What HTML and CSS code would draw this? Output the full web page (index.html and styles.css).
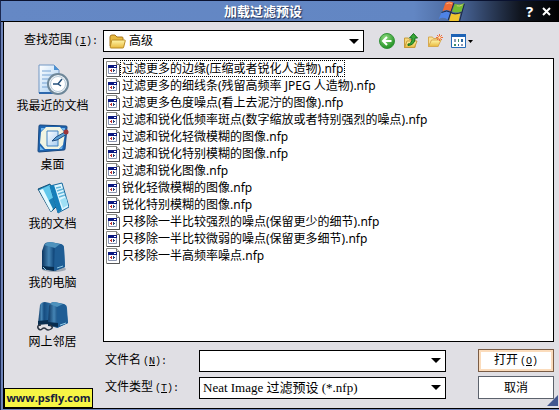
FILE: index.html
```
<!DOCTYPE html>
<html lang="zh-CN">

<head>
    <meta charset="UTF-8">
    <meta name="viewport" content="width=device-width, initial-scale=1.0">
    <title>加载过滤预设</title>
    <link rel="stylesheet" href="styles.css">
</head>

<body>
    <svg class="defs" aria-hidden="true">
        <defs>
            <linearGradient id="tower" x1="0" y1="0" x2="1" y2="0">
                <stop offset="0" stop-color="#0c3560" />
                <stop offset="0.3" stop-color="#4585b5" />
                <stop offset="0.5" stop-color="#154c80" />
                <stop offset="1" stop-color="#2c6ca2" />
            </linearGradient>
            <linearGradient id="folder" x1="0" y1="0" x2="0" y2="1">
                <stop offset="0" stop-color="#fff6a8" />
                <stop offset="1" stop-color="#e9b93c" />
            </linearGradient>
            <linearGradient id="paper" x1="0" y1="0" x2="1" y2="1">
                <stop offset="0" stop-color="#ffffff" />
                <stop offset="1" stop-color="#a5cdf2" />
            </linearGradient>
            <radialGradient id="green" cx="0.4" cy="0.3" r="0.8">
                <stop offset="0" stop-color="#8fdc80" />
                <stop offset="1" stop-color="#128515" />
            </radialGradient>
            <symbol id="file" viewBox="0 0 14 16">
                <path d="M.5 .5h10l3 3v12H.5z" fill="#fff" stroke="#8b8b86" />
                <path d="M10.500 .5v3h3" fill="#ddd" stroke="#73736f" />
                <path d="M13.500 4v11.500H1" fill="none" stroke="#555" />
                <path d="M2.500 5.500h8v7h-8z" fill="#fff" stroke="#8b95b0" />
                <path d="M2 4h9v3H2z" fill="#0a1880" />
                <path d="M8 5h2v1H8z" fill="#fff" />
                <path d="M4 9h1v1H4zM5 8h1v3H5z" fill="#b33" />
                <path d="M7 8h1v3H7zM8 9h1v1H8z" fill="#247" />
            </symbol>
            <symbol id="arrow" viewBox="0 0 10 5">
                <path d="M0 0h10L5 5z" fill="#000" />
            </symbol>
        </defs>
    </svg>

    <div class="dialog">
        <div class="titlebar">
            <h1>加载过滤预设</h1>
            <svg class="flag" viewBox="0 0 30 21" aria-hidden="true">
                <path d="M8 2Q12-1 17 2L14 11Q9 8 5 11z" fill="#ee6a35" />
                <path d="M18 3Q23 5 28 2L25 11Q20 13 15 11z" fill="#75bd32" />
                <path d="M4 12Q9 9 13 12L11 20Q6 16 1 19z" fill="#4e83e6" />
                <path d="M14 13Q19 15 24 12L22 21H12z" fill="#efc52f" />
                <path d="M17 2L11 20M28 3L23 21M4 12Q10 9 14 12T25 12" fill="none" stroke="#17223c" />
                <path d="M9 3Q12 1 15 3M20 5Q23 6 26 4" fill="none" stroke="#ffd1a0" opacity="0.7" />
            </svg>
            <button class="caption-btn" type="button" aria-label="帮助">?</button>
            <button class="caption-btn" type="button" aria-label="关闭">
                <svg width="9" height="9" viewBox="0 0 9 9"><path d="M1 1l7 7M8 1L1 8" stroke="#fff" stroke-width="2" /></svg>
            </button>
        </div>

        <form class="content">
            <div class="lookin">
                <label for="lookin">查找范围<span class="key">(<u>I</u>):</span></label>
                <div class="combo">
                    <svg class="folder" width="17" height="15" viewBox="0 0 17 15" aria-hidden="true">
                        <path d="M1 12V3q0-2 2-2h3l2 2h5q1 0 1 1v8z" fill="#e7b93f" stroke="#a8771c" />
                        <path d="M3.500 6h12q1 0 .7 1l-1.500 6q0 1-1 1H2q-1 0-.8-1L2.500 7q.2-1 1-1z" fill="url(#folder)" stroke="#b98a25" />
                    </svg>
                    <select id="lookin">
                        <option>高级</option>
                    </select>
                    <svg class="arrow"><use href="#arrow" /></svg>
                </div>
                <div class="tools">
                    <button type="button" aria-label="后退">
                        <svg width="16" height="16" viewBox="0 0 16 16">
                            <circle cx="8" cy="8" r="7.500" fill="url(#green)" stroke="#34933a" />
                            <path d="M12.500 8H4.500M8 4L4 8l4 4" fill="none" stroke="#fff" stroke-width="2" />
                        </svg>
                    </button>
                    <button type="button" aria-label="向上">
                        <svg width="16" height="16" viewBox="0 0 16 16">
                            <path d="M1.500 14.500V5h4l1 1.500H12v8z" fill="#f5d878" stroke="#c79a3a" />
                            <path d="M1.500 14.500L4 8h10l-2.500 6.500z" fill="url(#folder)" stroke="#c79a3a" />
                            <path d="M5 11q4 0 4-6H6.500l4-4.500L14.500 5H12q0 7-7 7.500z" fill="#38a838" stroke="#15701c" />
                        </svg>
                    </button>
                    <button type="button" aria-label="新建文件夹">
                        <svg width="16" height="16" viewBox="0 0 16 16">
                            <path d="M1.500 13.500V4h4l1 1.500H11v8z" fill="#f8e194" stroke="#d7a950" />
                            <path d="M1.500 13.500L4.500 7H14l-3 6.500z" fill="url(#folder)" stroke="#d7a950" />
                            <path d="M12.500 1v7M9 4.500h7M10 2l5 5M15 2l-5 5" stroke="#ee6b3e" />
                            <circle cx="12.500" cy="4.500" r="1.200" fill="#fff0b0" />
                        </svg>
                    </button>
                    <button type="button" aria-label="查看">
                        <svg width="22" height="15" viewBox="0 0 22 15">
                            <path d="M.5 .5h14v13H.5z" fill="#fff" stroke="#246bb8" />
                            <path d="M0 0h15v3H0z" fill="#1d63b5" />
                            <path d="M3 5h2v3H3zM10 10h2v2h-2z" fill="#8c99b5" />
                            <path d="M7 5h1v3H7zM3 10h2v2H3z" fill="#3c8f68" />
                            <path d="M10 5h2v3h-2zM7 10h1v2H7z" fill="#2e69a0" />
                            <path d="M17 6h5l-2.500 3z" fill="#000" />
                        </svg>
                    </button>
                </div>
            </div>

            <div class="middle">
                <nav class="places">
                    <button type="button">
                        <svg width="32" height="32" viewBox="0 0 32 32">
                            <path d="M2 1h15l5 5v23H2z" fill="url(#paper)" stroke="#7297c4" />
                            <path d="M17 1v5h5" fill="#4d91d2" />
                            <path d="M5 7h9M5 11h12M5 15h9M5 19h8M5 23h8" stroke="#77a3d4" />
                            <path d="M2 29h19" stroke="#2e68ad" stroke-width="2" />
                            <circle cx="21" cy="20" r="10" fill="#edf3f8" stroke="#6e8799" stroke-width="2" />
                            <circle cx="21" cy="20" r="7.500" fill="#fff" stroke="#b8cad8" />
                            <path d="M16 20h5l4-5M21 20l3 2" fill="none" stroke="#24507c" stroke-width="1.500" />
                        </svg>
                        我最近的文档
                    </button>
                    <button type="button">
                        <svg width="32" height="32" viewBox="0 0 32 32">
                            <path d="M3 2l26 1q1 0 1 1l-2 22q0 1-1 1L2 29q-1 0-1-1L2 3q0-1 1-1z" fill="#1d65b3" stroke="#174780" />
                            <path d="M9 4h14l5 6-2 12-4 4H8l-5-6 1-11z" fill="#f1f4e2" />
                            <path d="M4 8V5h4zM28 5v4l-4-4zM3 23v4h4zM26 23l-1 3h-3z" fill="#75b9ed" />
                            <path d="M10 8h11v15H10z" fill="url(#paper)" stroke="#4384c2" />
                            <path d="M15 18l4-4 9-5 2 2-10 6z" fill="#5ba0d6" stroke="#244f80" />
                            <circle cx="29" cy="9" r="2.500" fill="#9c3638" />
                        </svg>
                        桌面
                    </button>
                    <button type="button">
                        <svg width="32" height="32" viewBox="0 0 32 32">
                            <path d="M1 7l12-5 7 22-6 6z" fill="#1a80b7" stroke="#155178" />
                            <path d="M4 7l9-4 4 12-8 5z" fill="#62c8ec" />
                            <path d="M2 8l4-1 10 20-2 3z" fill="#e4faff" />
                            <path d="M13 4l12-3 7 24-11 6z" fill="#dff6ff" stroke="#176a9e" />
                            <path d="M13 4l4-1 8 25-4 3z" fill="#157eba" />
                            <path d="M19 6l5-1M20 9l6-2M21 12l6-2M22 15l6-2" stroke="#64b7db" stroke-width="1.500" />
                            <path d="M23 18l6-3 2 8-5 3z" fill="#9fdff5" />
                        </svg>
                        我的文档
                    </button>
                    <button type="button">
                        <svg width="32" height="32" viewBox="0 0 32 32">
                            <ellipse cx="17" cy="28" rx="12" ry="3" fill="#9fa9b5" />
                            <path d="M7 4q1-3 6-3l11 2q3 1 3 4l1 19-10 4-13-2V10z" fill="url(#tower)" />
                            <path d="M18 7q1-4 4-4 5 0 5 4l1 19-11 4z" fill="#1f5d94" />
                            <path d="M7 4q3-3 7-3l9 2-5 4z" fill="#4e92bd" />
                            <path d="M5 25l12 1v4L5 28z" fill="#092d4f" />
                            <path d="M6 26l3 3M20 27l6-2" stroke="#8fc9e7" />
                        </svg>
                        我的电脑
                    </button>
                    <button type="button">
                        <svg width="32" height="32" viewBox="0 0 32 32">
                            <path d="M3 5q1-3 5-3l5 1-1 19-11 2z" fill="url(#tower)" />
                            <path d="M12 6q1-4 5-4l10 2q3 1 3 4l1 15-11 5-9-3z" fill="url(#tower)" />
                            <path d="M20 8q1-4 4-4 5 0 5 3l2 16-11 5z" fill="#1f5d94" />
                            <path d="M13 4q2-2 5-2l8 2-6 3z" fill="#4e92bd" />
                            <path d="M1 21l10-1v4L1 25zM11 22l10 1v4l-10-1z" fill="#092d4f" />
                            <path d="M4 25q-4 0-3 3 2 3 4 1t4 0 5 0-1-4" fill="none" stroke="#2b3441" stroke-width="1.500" />
                            <path d="M23 25l6-2" stroke="#8fc9e7" />
                        </svg>
                        网上邻居
                    </button>
                </nav>

                <ul class="files">
                    <li><svg><use href="#file" /></svg><button class="selected" type="button">过滤更多的边缘(压缩或者锐化人造物).nfp</button></li>
                    <li><svg><use href="#file" /></svg><button type="button">过滤更多的细线条(残留高频率 JPEG 人造物).nfp</button></li>
                    <li><svg><use href="#file" /></svg><button type="button">过滤更多色度噪点(看上去泥泞的图像).nfp</button></li>
                    <li><svg><use href="#file" /></svg><button type="button">过滤和锐化低频率斑点(数字缩放或者特别强烈的噪点).nfp</button></li>
                    <li><svg><use href="#file" /></svg><button type="button">过滤和锐化轻微模糊的图像.nfp</button></li>
                    <li><svg><use href="#file" /></svg><button type="button">过滤和锐化特别模糊的图像.nfp</button></li>
                    <li><svg><use href="#file" /></svg><button type="button">过滤和锐化图像.nfp</button></li>
                    <li><svg><use href="#file" /></svg><button type="button">锐化轻微模糊的图像.nfp</button></li>
                    <li><svg><use href="#file" /></svg><button type="button">锐化特别模糊的图像.nfp</button></li>
                    <li><svg><use href="#file" /></svg><button type="button">只移除一半比较强烈的噪点(保留更少的细节).nfp</button></li>
                    <li><svg><use href="#file" /></svg><button type="button">只移除一半比较微弱的噪点(保留更多细节).nfp</button></li>
                    <li><svg><use href="#file" /></svg><button type="button">只移除一半高频率噪点.nfp</button></li>
                </ul>
            </div>

            <div class="bottom">
                <a class="site" href="#">www.psfly.com</a>
                <div class="fields">
                    <label for="filename">文件名<span class="key">(<u>N</u>):</span></label>
                    <div class="combo">
                        <input type="text" id="filename">
                        <svg class="arrow"><use href="#arrow" /></svg>
                    </div>
                    <button class="btn default" type="submit">打开<span class="key">(<u>O</u>)</span></button>

                    <label for="filetype">文件类型<span class="key">(<u>T</u>):</span></label>
                    <div class="combo">
                        <select id="filetype">
                            <option>Neat Image 过滤预设 (*.nfp)</option>
                        </select>
                        <svg class="arrow"><use href="#arrow" /></svg>
                    </div>
                    <button class="btn" type="button">取消</button>
                </div>
            </div>
            <svg class="grip" width="11" height="11" viewBox="0 0 11 11" aria-hidden="true"><path d="M11 0v11H0z" fill="#43578f" /></svg>
        </form>
    </div>
</body>

</html>
```
FILE: styles.css
```
* {
    box-sizing: border-box;
}

body {
    margin: 0;
    font-family: "Noto Sans", "Noto Sans CJK SC", sans-serif;
    font-size: 12px;
    line-height: 16px;
    color: #000;
}

button,
input,
select {
    font: inherit;
    color: inherit;
    margin: 0;
    padding: 0;
    border: none;
    background: none;
}

svg {
    flex: none;
    display: block;
}

.defs {
    position: absolute;
    width: 0;
    height: 0;
}

.dialog {
    display: flex;
    flex-direction: column;
    min-height: 100vh;
    background-color: #6d83b8;
    border-top: 1px solid #0a1230;
    border-left: 1px solid #1b2850;
    padding: 0 0 1px 2px;
}

/* title bar */
.titlebar {
    display: flex;
    align-items: center;
    height: 21px;
    margin-left: -2px;
    padding-right: 4px;
    background: linear-gradient(to right, #6588c5 0%, #6286c3 74%, #49669a 82%, #10151f 93%, #000 100%);
    border-bottom: 1px solid #000;
}

.titlebar h1 {
    flex: 1;
    margin: 0;
    padding-left: 88px;
    font-family: "Noto Sans CJK SC", sans-serif;
    font-size: 13px;
    font-weight: bold;
    line-height: 20px;
    text-align: center;
    color: #fff;
    text-shadow: 1px 1px 1px #1c2d55;
}

.flag {
    width: 30px;
    height: 20px;
    margin-right: 54px;
}

.caption-btn {
    display: flex;
    justify-content: center;
    align-items: center;
    width: 17px;
    height: 20px;
    font-size: 15px;
    font-weight: bold;
    color: #fff;
}

/* dialog body */
.content {
    flex: 1;
    display: flex;
    flex-direction: column;
    position: relative;
    background-color: #e0dfe4;
    border-left: 1px solid #000;
    border-bottom: 1px solid #000;
    padding-top: 8px;
}

.combo {
    position: relative;
    display: flex;
    align-items: center;
    background-color: #fff;
    border: 1px solid #000;
    height: 22px;
}

.combo select,
.combo input {
    flex: 1;
    min-width: 0;
    height: 20px;
    padding: 0 20px 0 3px;
    appearance: none;
    outline: none;
}

.arrow {
    position: absolute;
    right: 4px;
    width: 10px;
    height: 5px;
    pointer-events: none;
}

.key {
    font-family: "Liberation Mono", monospace;
    font-size: 10px;
    margin-left: 2px;
}

.lookin {
    display: grid;
    grid-template-columns: 99px 4fr 3fr;
    align-items: center;
}

.lookin label {
    padding-left: 20px;
}

.folder {
    margin-left: 5px;
}

.tools {
    display: flex;
    align-items: center;
    gap: 8px;
    padding-left: 15px;
}

.middle {
    flex: 1;
    display: flex;
    margin-top: 6px;
    padding-right: 5px;
}

/* the last label reaches down beside the file name row */
.places {
    display: flex;
    flex-direction: column;
    gap: 9px;
    width: 99px;
    padding-top: 6px;
    margin-bottom: -16px;
}

.places button {
    display: flex;
    flex-direction: column;
    align-items: center;
    gap: 2px;
    padding-right: 2px;
    white-space: nowrap;
}

.files {
    flex: 1;
    margin: 0;
    padding: 1px 2px;
    list-style: none;
    background-color: #fff;
    border: 1px solid #000;
}

.files li {
    display: flex;
    align-items: center;
    height: 17px;
}

.files svg {
    width: 14px;
    height: 16px;
}

.files button {
    height: 17px;
    padding: 0 1px;
    border: 1px solid transparent;
    line-height: 15px;
    white-space: nowrap;
}

.files .selected {
    border: 1px dotted #000;
}

/* file name, type and buttons */
.bottom {
    display: flex;
    align-items: flex-end;
    margin-top: 7px;
    padding-right: 5px;
}

.site {
    width: 89px;
    height: 20px;
    margin-right: 12px;
    background-color: #f7f545;
    border: 1px solid #000;
    font-family: "Open Sans", sans-serif;
    font-size: 11px;
    font-weight: bold;
    line-height: 17px;
    text-align: center;
    color: #15203c;
    text-decoration: none;
}

.fields {
    flex: 1;
    display: grid;
    grid-template-columns: 94px 1fr 76px;
    row-gap: 4px;
    align-items: center;
    padding-bottom: 9px;
}

.fields .combo {
    margin-right: 32px;
}

#filetype {
    font-family: "Liberation Serif", "Noto Sans CJK SC", serif;
    font-size: 13px;
}

.btn {
    height: 23px;
    background-color: #fff;
    border: 1px solid #5c626c;
}

.default {
    border-color: #7a5c45;
    box-shadow: inset 0 0 0 2px #fbdcbc;
}

.grip {
    position: absolute;
    right: 1px;
    bottom: 2px;
}
```
